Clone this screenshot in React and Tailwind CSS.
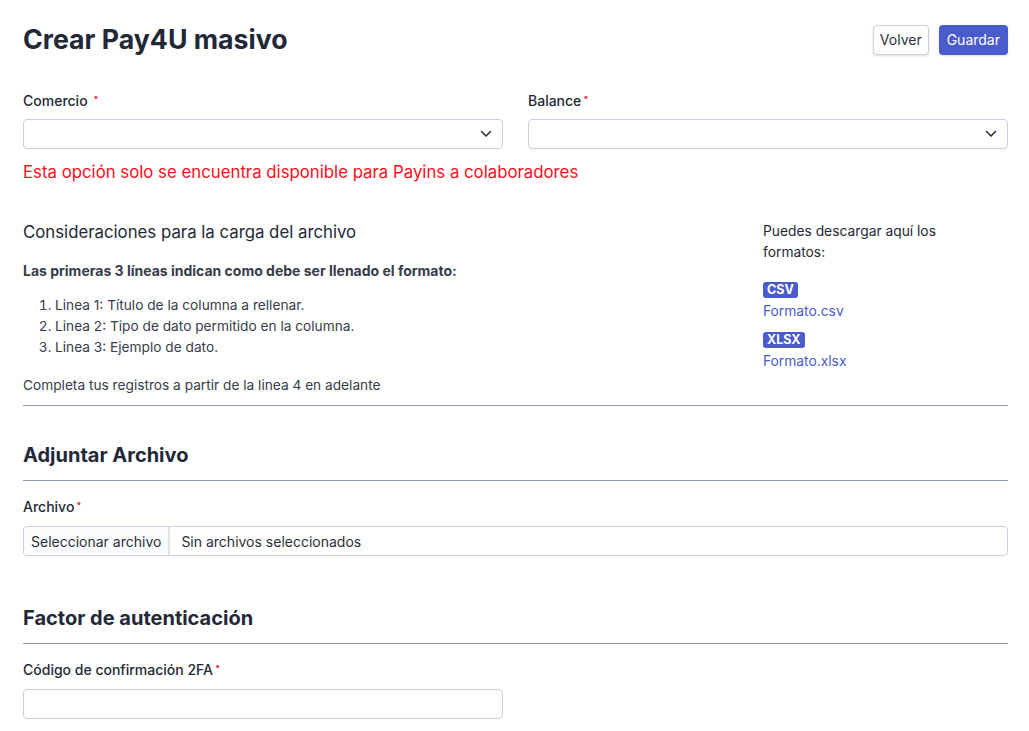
import React from "react";

function Req() {
  return <span className="text-[#e5484d] text-[10px] align-top relative -top-[5px] ml-[2px]">•</span>;
}

function SelectBox() {
  return (
    <div className="h-[30px] border border-[#c5d1de] rounded-[4px] bg-white flex items-center justify-end pr-[10px]">
      <svg width="12" height="8" viewBox="0 0 12 8" fill="none">
        <path d="M1.5 1.5l4.5 4.5 4.5-4.5" stroke="#2a2f3a" strokeWidth="1.6" strokeLinecap="round" strokeLinejoin="round" />
      </svg>
    </div>
  );
}

export default function App() {
  return (
    <div className="bg-white min-h-screen text-[#232936] font-['Inter',sans-serif] pl-[23px] pr-[21px] pt-[24px]">
      {/* header */}
      <div className="flex items-center justify-between h-[31px]">
        <h1 className="text-[26.7px] font-bold text-[#222838]">Crear Pay4U masivo</h1>
        <div className="flex gap-[10px]">
          <button className="h-[30px] px-[6px] text-[14px] border border-[#c5d1de] rounded-[4px] bg-white text-[#2a2f3a] shadow-sm">Volver</button>
          <button className="h-[30px] px-[8px] text-[14px] rounded-[4px] bg-[#4a5bcc] text-white shadow-sm">Guardar</button>
        </div>
      </div>

      {/* selects */}
      <div className="grid grid-cols-2 gap-[25px] mt-[37px]">
        <div>
          <label className="block text-[14px] font-medium h-[19px] leading-[18px]">
            Comercio <Req />
          </label>
          <div className="mt-[8px]"><SelectBox /></div>
        </div>
        <div>
          <label className="block text-[14px] font-medium h-[19px] leading-[18px]">
            Balance<Req />
          </label>
          <div className="mt-[8px]"><SelectBox /></div>
        </div>
      </div>

      <p className="text-[16.8px] text-[#fb0e1c] mt-[12px] leading-[22px]">
        Esta opción solo se encuentra disponible para Payins a colaboradores
      </p>

      {/* considerations */}
      <div className="flex justify-between mt-[38px]">
        <div>
          <h3 className="text-[16.8px] leading-[22px] text-[#232936]">Consideraciones para la carga del archivo</h3>
          <p className="text-[14px] font-bold mt-[17px] text-[#363c4a]">
            Las primeras 3 líneas indican como debe ser llenado el formato:
          </p>
          <ol className="list-decimal pl-[32px] mt-[14px] text-[13.7px] leading-[21px] text-[#363c4a]">
            <li>Linea 1: Título de la columna a rellenar.</li>
            <li>Linea 2: Tipo de dato permitido en la columna.</li>
            <li>Linea 3: Ejemplo de dato.</li>
          </ol>
          <p className="text-[13.7px] text-[#363c4a] mt-[17px] leading-[21px]">
            Completa tus registros a partir de la linea 4 en adelante
          </p>
        </div>
        <div className="w-[245px] text-[13.8px] leading-[21px]">
          <p className="w-[185px]">Puedes descargar aquí los formatos:</p>
          <div className="mt-[16px]">
            <span className="inline-block bg-[#4a5bcc] text-white text-[12.5px] font-bold leading-[16px] px-[4px] rounded-[3px]">CSV</span>
            <a className="block text-[#4a5bcc] leading-[20px] mt-[1px]">Formato.csv</a>
          </div>
          <div className="mt-[8px]">
            <span className="inline-block bg-[#4a5bcc] text-white text-[12.5px] font-bold leading-[16px] px-[4px] rounded-[3px]">XLSX</span>
            <a className="block text-[#4a5bcc] leading-[20px] mt-[1px]">Formato.xlsx</a>
          </div>
        </div>
      </div>
      <hr className="border-0 border-t border-[#8b9bb0] mt-[9px]" />

      {/* adjuntar */}
      <h2 className="text-[20px] font-bold mt-[36px] leading-[26px] text-[#222838]">Adjuntar Archivo</h2>
      <hr className="border-0 border-t border-[#8b9bb0] mt-[12px]" />
      <label className="block text-[14px] font-medium mt-[17px] h-[20px] leading-[18px]">
        Archivo<Req />
      </label>
      <div className="mt-[8px] h-[30px] border border-[#c5d1de] rounded-[4px] flex items-center text-[14px] text-[#2a2f3a] overflow-hidden">
        <div className="h-full flex items-center px-[7px] bg-[#fbfcfd] border-r-2 border-[#dde3ea]">Seleccionar archivo</div>
        <div className="pl-[11px]">Sin archivos seleccionados</div>
      </div>

      {/* factor */}
      <h2 className="text-[20px] font-bold mt-[49px] leading-[26px] text-[#222838]">Factor de autenticación</h2>
      <hr className="border-0 border-t border-[#8b9bb0] mt-[12px]" />
      <label className="block text-[14px] font-medium mt-[17px] h-[20px] leading-[18px]">
        Código de confirmación 2FA<Req />
      </label>
      <div className="grid grid-cols-2 gap-[25px] mt-[8px]">
        <input className="h-[30px] border border-[#c5d1de] rounded-[4px] bg-white outline-none" />
      </div>
    </div>
  );
}
